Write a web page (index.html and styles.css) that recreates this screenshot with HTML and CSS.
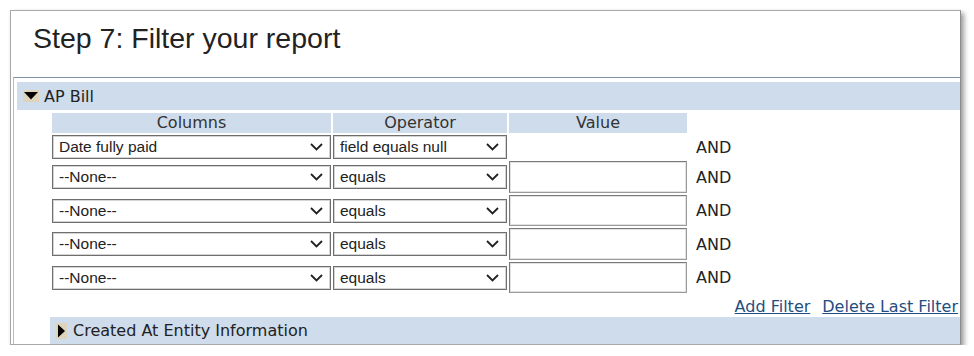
FILE: index.html
```html
<!DOCTYPE html>
<html lang="en">
  <head>
    <meta charset="UTF-8" />
    <title>Step 7: Filter your report</title>
    <link rel="stylesheet" href="styles.css">
  </head>
  <body>
    <div class="panel">
      <h1 class="title">Step 7: Filter your report</h1>
      <div class="section">
        <div class="bar">
          <span class="toggle toggle-down">
            <svg width="16" height="12" viewBox="0 0 16 12"><polygon points="1,2 15,2 8,9.5" fill="#000"/></svg>
          </span>
          AP Bill
        </div>
        <div class="filters">
          <div class="grid">
            <div class="th">Columns</div>
            <div class="th">Operator</div>
            <div class="th">Value</div>
            <div></div>

            <div class="select"><span>Date fully paid</span><svg class="chev" width="13" height="8" viewBox="0 0 13 8"><polyline points="1,1 6.5,6.5 12,1" fill="none" stroke="#222" stroke-width="1.8"/></svg></div>
            <div class="select"><span>field equals null</span><svg class="chev" width="13" height="8" viewBox="0 0 13 8"><polyline points="1,1 6.5,6.5 12,1" fill="none" stroke="#222" stroke-width="1.8"/></svg></div>
            <div></div>
            <div class="and">AND</div>

            <div class="select"><span>--None--</span><svg class="chev" width="13" height="8" viewBox="0 0 13 8"><polyline points="1,1 6.5,6.5 12,1" fill="none" stroke="#222" stroke-width="1.8"/></svg></div>
            <div class="select"><span>equals</span><svg class="chev" width="13" height="8" viewBox="0 0 13 8"><polyline points="1,1 6.5,6.5 12,1" fill="none" stroke="#222" stroke-width="1.8"/></svg></div>
            <div class="input"></div>
            <div class="and">AND</div>

            <div class="select"><span>--None--</span><svg class="chev" width="13" height="8" viewBox="0 0 13 8"><polyline points="1,1 6.5,6.5 12,1" fill="none" stroke="#222" stroke-width="1.8"/></svg></div>
            <div class="select"><span>equals</span><svg class="chev" width="13" height="8" viewBox="0 0 13 8"><polyline points="1,1 6.5,6.5 12,1" fill="none" stroke="#222" stroke-width="1.8"/></svg></div>
            <div class="input"></div>
            <div class="and">AND</div>

            <div class="select"><span>--None--</span><svg class="chev" width="13" height="8" viewBox="0 0 13 8"><polyline points="1,1 6.5,6.5 12,1" fill="none" stroke="#222" stroke-width="1.8"/></svg></div>
            <div class="select"><span>equals</span><svg class="chev" width="13" height="8" viewBox="0 0 13 8"><polyline points="1,1 6.5,6.5 12,1" fill="none" stroke="#222" stroke-width="1.8"/></svg></div>
            <div class="input"></div>
            <div class="and">AND</div>

            <div class="select"><span>--None--</span><svg class="chev" width="13" height="8" viewBox="0 0 13 8"><polyline points="1,1 6.5,6.5 12,1" fill="none" stroke="#222" stroke-width="1.8"/></svg></div>
            <div class="select"><span>equals</span><svg class="chev" width="13" height="8" viewBox="0 0 13 8"><polyline points="1,1 6.5,6.5 12,1" fill="none" stroke="#222" stroke-width="1.8"/></svg></div>
            <div class="input"></div>
            <div class="and">AND</div>
          </div>
          <div class="links">
            <a href="#">Add Filter</a>
            <a href="#">Delete Last Filter</a>
          </div>
          <div class="bar bar-sub">
            <span class="toggle toggle-right">
              <svg width="11" height="16" viewBox="0 0 11 16"><polygon points="2,1.5 9,8 2,14.5" fill="#000"/></svg>
            </span>
            Created At Entity Information
          </div>
        </div>
      </div>
    </div>
  </body>
</html>
```

FILE: styles.css
```css
* {
  margin: 0;
  padding: 0;
  box-sizing: border-box;
}

body {
  background: #fff;
  font-family: "DejaVu Sans", Verdana, sans-serif;
  font-size: 16px;
  color: #222;
}

.panel {
  margin: 10px 0 0 10px;
  width: 951px;
  border: 1px solid #a8a8a8;
  border-right-color: #8c8c8c;
  background: #fff;
  box-shadow: 3px 3px 5px rgba(0, 0, 0, 0.4);
}

.title {
  height: 66px;
  padding: 11px 0 0 22px;
  font-family: "Liberation Sans", Arial, sans-serif;
  font-size: 28.5px;
  font-weight: normal;
  line-height: 32px;
  color: #222;
}

.section {
  margin-left: 2px;
  border-top: 1px solid #7f91a6;
  border-left: 1px solid #b4bcc6;
  padding: 4px 0 0 3px;
}

.bar {
  height: 28px;
  display: flex;
  align-items: center;
  background: #cedcec;
  color: #222;
  line-height: 19px;
}

.bar-sub {
  height: 27px;
  margin-top: 1px;
}

.toggle {
  display: flex;
  align-items: center;
  justify-content: center;
  background: #ddd4bb;
}

.toggle-down {
  width: 16px;
  height: 12px;
  margin: 0 5px 0 6px;
}

.toggle-right {
  width: 11px;
  height: 16px;
  margin: 0 6px 0 6px;
}

.filters {
  margin-left: 33px;
}

.grid {
  margin: 3px 0 0 2px;
  display: grid;
  grid-template-columns: 279px 174px 178px auto;
  grid-template-rows: 20px 24px 32px 31px 32px 31px;
  column-gap: 2px;
  row-gap: 2px;
}

.th {
  background: #cedcec;
  text-align: center;
  line-height: 20px;
  color: #333;
}

.select {
  height: 24px;
  align-self: center;
  display: flex;
  align-items: center;
  justify-content: space-between;
  padding: 0 7px 0 6px;
  border: 1px solid #6e6e6e;
  box-shadow: inset 0 0 0 1px #d4d4d4;
  background: #fff;
  font-family: "Liberation Sans", Arial, sans-serif;
  font-size: 15.5px;
  color: #222;
}

.chev {
  flex-shrink: 0;
}

.input {
  height: 100%;
  border: 1px solid #7a7a7a;
  border-right-color: #9a9a9a;
  border-bottom-color: #9a9a9a;
  box-shadow: inset 0 0 0 1px #e2e2e2;
  background: #fff;
}

.and {
  align-self: center;
  padding-left: 7px;
  color: #222;
}

.links {
  margin-top: 4px;
  display: flex;
  justify-content: flex-end;
  gap: 12px;
  padding-right: 2px;
  line-height: 19px;
}

.links a {
  color: #244d80;
  text-decoration: underline;
}
```
